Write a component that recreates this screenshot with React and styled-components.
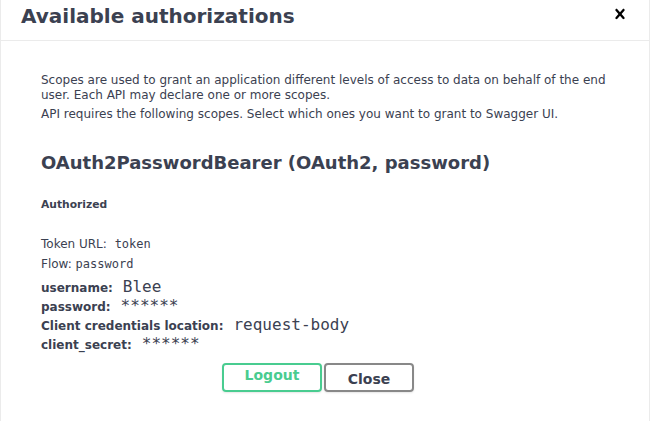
import styled, { createGlobalStyle } from 'styled-components';

const GlobalStyle = createGlobalStyle`
  html, body {
    margin: 0;
    padding: 0;
    background: #fff;
  }
  body {
    font-family: "DejaVu Sans", sans-serif;
    color: #3b4151;
  }
`;

const CloseIcon = () => (
  <svg width="20" height="20" viewBox="0 0 20 20" aria-hidden="true">
    <path
      fill="#000"
      d="M14.348 14.849c-.469.469-1.229.469-1.697 0L10 11.819l-2.651 3.029c-.469.469-1.229.469-1.697 0-.469-.469-.469-1.229 0-1.697l2.758-3.15-2.759-3.152c-.469-.469-.469-1.228 0-1.697.469-.469 1.228-.469 1.697 0L10 8.183l2.651-3.031c.469-.469 1.228-.469 1.697 0 .469.469.469 1.229 0 1.697l-2.758 3.152 2.758 3.15c.469.469.469 1.229 0 1.698z"
    />
  </svg>
);

const App = () => {
  return (
    <>
      <GlobalStyle />
      <Modal>
        <Header>
          <Title>Available authorizations</Title>
          <CloseButton type="button" aria-label="Close">
            <CloseIcon />
          </CloseButton>
        </Header>

        <Content>
          <AuthContainer>
            <Text>
              Scopes are used to grant an application different levels of access to data on behalf
              of the end user. Each API may declare one or more scopes.
            </Text>
            <Text>API requires the following scopes. Select which ones you want to grant to Swagger UI.</Text>

            <SchemeTitle>OAuth2PasswordBearer (OAuth2, password)</SchemeTitle>
            <Status>Authorized</Status>

            <Info>
              <InfoRow>
                Token URL: <Code $gap>token</Code>
              </InfoRow>
              <InfoRow>
                Flow: <Code>password</Code>
              </InfoRow>
            </Info>

            <Fields>
              <Field>
                <Label>username:</Label>
                <Value>Blee</Value>
              </Field>
              <Field>
                <Label>password:</Label>
                <Value>******</Value>
              </Field>
              <Field>
                <Label>Client credentials location:</Label>
                <Value>request-body</Value>
              </Field>
              <Field>
                <Label>client_secret:</Label>
                <Value>******</Value>
              </Field>
            </Fields>

            <ButtonRow>
              <Button type="button" $variant="authorize">Logout</Button>
              <Button type="button">Close</Button>
            </ButtonRow>
          </AuthContainer>
        </Content>
      </Modal>
    </>
  );
};

export default App;

const Modal = styled.div`
  box-sizing: border-box;
  width: 650px;
  height: 421px;
  background: #fff;
  border: 1px solid #ebebeb;
  border-top: none;
  border-bottom: none;
  overflow: hidden;
`;

const Header = styled.div`
  display: flex;
  align-items: flex-start;
  padding: 4px 9px 12px 20px;
  border-bottom: 1px solid #ebebeb;
`;

const Title = styled.h3`
  flex: 1;
  margin: 0;
  font-size: 20px;
  line-height: 24px;
  font-weight: 700;
  color: #3b4151;
`;

const CloseButton = styled.button`
  display: flex;
  padding: 0 10px;
  border: none;
  background: none;
  cursor: pointer;
`;

const Content = styled.div`
  padding: 32px 20px 0;
`;

const AuthContainer = styled.div`
  padding: 0 20px;
`;

const Text = styled.p`
  margin: 0 0 4px;
  font-size: 12px;
  line-height: 15px;
  color: #3b4151;
`;

const SchemeTitle = styled.h4`
  margin: 30px 0 0;
  font-size: 18px;
  line-height: 22px;
  font-weight: 700;
  color: #3b4151;
`;

const Status = styled.h6`
  margin: 24px 0 0;
  font-size: 10.72px;
  line-height: 14px;
  font-weight: 700;
  color: #3b4151;
`;

const Info = styled.div`
  margin-top: 22px;
`;

const InfoRow = styled.p`
  margin: 0;
  font-size: 12px;
  line-height: 20px;
  color: #3b4151;
`;

const Code = styled.code`
  margin-left: ${p => (p.$gap ? '4px' : '0')};
  font-family: "DejaVu Sans Mono", monospace;
  font-size: 12px;
`;

const Fields = styled.div`
  margin-top: 3px;
`;

const Field = styled.div`
  display: flex;
  align-items: baseline;
  gap: 10px;
  height: 19px;
`;

const Label = styled.label`
  font-size: 12px;
  font-weight: 700;
  color: #3b4151;
`;

const Value = styled.code`
  font-family: "DejaVu Sans Mono", monospace;
  font-size: 16px;
  line-height: 19px;
  color: #3b4151;
`;

const ButtonRow = styled.div`
  display: flex;
  justify-content: center;
  gap: 2px;
  margin-top: 10px;
  padding-right: 14px;
`;

const Button = styled.button`
  box-sizing: border-box;
  height: 29px;
  min-width: ${p => (p.$variant === 'authorize' ? '100px' : '90px')};
  padding: ${p => (p.$variant === 'authorize' ? '0 0 5px' : '2px 0 0')};
  font-family: "DejaVu Sans", sans-serif;
  font-size: 14px;
  font-weight: 700;
  color: ${p => (p.$variant === 'authorize' ? '#49cc90' : '#3b4151')};
  background: transparent;
  border: 2px solid ${p => (p.$variant === 'authorize' ? '#49cc90' : '#888')};
  border-radius: 4px;
  box-shadow: 0 1px 2px rgba(0, 0, 0, 0.1);
  cursor: pointer;
`;
